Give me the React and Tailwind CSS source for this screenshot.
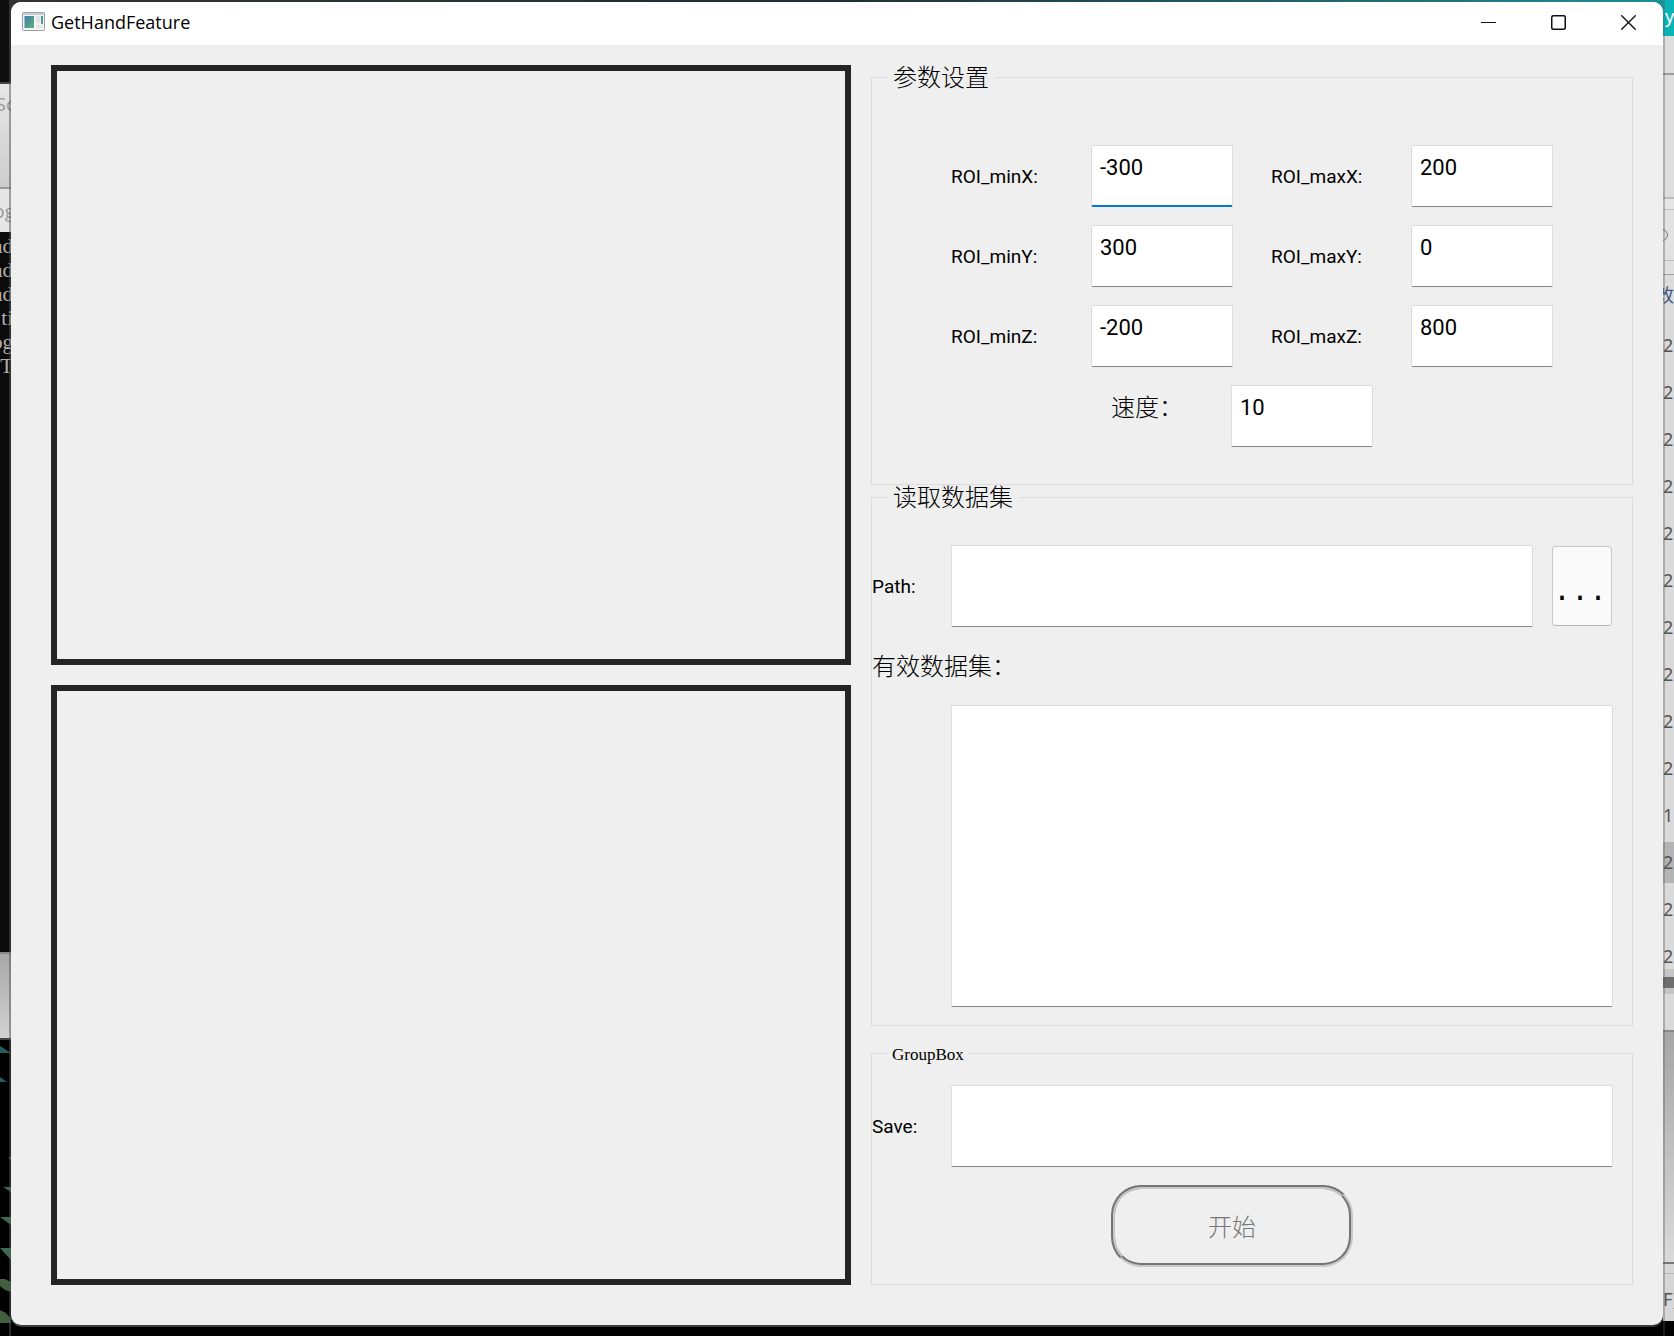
import React from "react";

const inputBase =
  "block resize-none overflow-hidden rounded-[2px] border border-[#dedede] bg-white px-2 pt-2 font-[Roboto,sans-serif] text-[22px] leading-7 text-black outline-none";
const inputStyle = `${inputBase} border-b-[#868686]`;
const activeInputStyle = `${inputBase} border-b-2 border-b-[#0078d4]`;
const latinLabel = "pt-0.5 font-[Roboto,sans-serif] text-[19px] leading-6 text-black";
const cjkLabel = "font-['Noto_Sans_CJK_SC',sans-serif] text-[24px] font-light text-black";

function Group({ title, latin, className, children }) {
  return (
    <fieldset className={`min-w-0 border border-[#dcdcdc] ${className}`}>
      <legend
        className={
          latin
            ? "ml-[15px] h-6 px-[5px] font-['Liberation_Serif',serif] text-[17px] leading-7 text-black"
            : "ml-[15px] h-6 px-1.5 font-['Noto_Sans_CJK_SC',sans-serif] text-[24px] leading-[22px] font-light text-black"
        }
      >
        {title}
      </legend>
      {children}
    </fieldset>
  );
}

function RoiField({ id, value, active }) {
  return (
    <div className="flex items-center">
      <label htmlFor={id} className={`flex-1 ${latinLabel}`}>
        {id}:
      </label>
      <textarea
        id={id}
        defaultValue={value}
        className={`h-[62px] w-[142px] ${active ? activeInputStyle : inputStyle}`}
      />
    </div>
  );
}

function AppIcon() {
  return (
    <svg width="23" height="19" viewBox="0 0 23 19" aria-hidden="true">
      <defs>
        <linearGradient id="pane" x1="0" y1="0" x2="1" y2="1">
          <stop offset="0" stopColor="#3f7fae" />
          <stop offset="1" stopColor="#5fb07a" />
        </linearGradient>
      </defs>
      <rect x="0.5" y="0.5" width="22" height="18" rx="1" fill="#f3f3f3" stroke="#9aa0a6" />
      <rect x="1" y="1" width="21" height="2" fill="#c9ced3" />
      <rect x="2.5" y="4" width="9.5" height="12" fill="url(#pane)" />
      <rect x="14" y="4" width="4" height="7" fill="#e2e2e2" />
      <rect x="19" y="4" width="2" height="8" fill="url(#pane)" />
      <rect x="14" y="13" width="7" height="3" fill="#e6e6e6" />
    </svg>
  );
}

function LeftDesktop() {
  const lines = ["ad", "ad", "ad", "ti", "og", "T"];
  return (
    <div className="relative w-[11px] shrink-0 overflow-hidden bg-black" aria-hidden="true">
      <div className="h-[82px] bg-[#0e0e0e]" />
      <div className="flex h-[107px] justify-end overflow-hidden border-t-2 border-b-2 border-t-[#444] border-b-[#9a9a9a] bg-linear-to-b from-[#e8e8e8] to-[#cccccc] pt-2">
        <span className="-mr-1 font-['Open_Sans',sans-serif] text-[19px] leading-6 text-[#999]">Sc</span>
      </div>
      <div className="flex h-[43px] items-center justify-end overflow-hidden bg-[#e6e6e6]">
        <span className="-mr-1 font-['Open_Sans',sans-serif] text-[19px] leading-5 text-[#999]">og</span>
      </div>
      <div className="flex h-[720px] flex-col items-end overflow-hidden bg-[#0b0b0b] pt-0.5">
        {lines.map((line, i) => (
          <span key={i} className="-mr-0.5 font-['Liberation_Serif',serif] text-[21px] leading-6 text-[#b0b0b0]">
            {line}
          </span>
        ))}
      </div>
      <div className="h-[88px] border-t-2 border-b-2 border-t-[#888] border-b-[#444] bg-linear-to-b from-[#a8a8a8] to-[#d2d2d2]" />
      <svg width="11" height="296" viewBox="0 1040 11 296" className="block">
        <path d="M0 1046L11 1053H0ZM0 1077L7 1082H0Z" fill="#245c60" />
        <path d="M8 1157H11V1160ZM3 1187H11V1192ZM0 1217H11V1225ZM0 1248H11V1260Z" fill="#3d6a55" />
        <path d="M0 1279H5L11 1282V1292L5 1290L0 1286ZM0 1310L6 1313L11 1319V1323H0Z" fill="#3f5f3f" />
      </svg>
      <div className="absolute inset-y-0 right-0 w-[2px] bg-[#555]/50" />
    </div>
  );
}

function RightDesktop() {
  const rows = ["2", "2", "2", "2", "2", "2", "2", "2", "2", "2", "1.", "2", "2", "2"];
  return (
    <div
      className="relative w-[11px] shrink-0 overflow-hidden bg-black font-['Noto_Sans','Noto_Sans_CJK_SC',sans-serif] text-[18px] text-[#555]"
      aria-hidden="true"
    >
      <div className="h-[36px] bg-[#08b4ba] pl-0.5 leading-[32px] text-white">y</div>
      <div className="h-[39px] border-b-2 border-[#9c9c9c] bg-[#dedede]" />
      <div className="h-[124px] border-b-2 border-[#bdbdbd] bg-[#dedede]" />
      <div className="h-[11px] border-b border-[#c2c2c2] bg-[#e6e6e6]" />
      <div className="flex h-[51px] items-center justify-end overflow-hidden border-b border-[#bdbdbd] bg-[#e2e2e2] pr-1.5">
        <span className="size-3 shrink-0 rounded-full border border-[#777]" />
      </div>
      <div className="h-[14px] border-b border-[#a0a0a0] bg-[#e0e0e0]" />
      <div className="flex h-[47px] justify-end overflow-hidden bg-[#dcdcdc] leading-10 text-[#3d587e]">改</div>
      {rows.map((r, i) => (
        <div
          key={i}
          className={`h-[47px] overflow-hidden ${i === 11 ? "border-y-[3px] border-[#dadada] bg-[#b4b4b4] leading-[40px]" : "bg-[#dadada] leading-[46px]"}`}
        >
          {r}
        </div>
      ))}
      <div className="-mt-[11px] h-[8px] bg-[#c5c5c5]" />
      <div className="h-[11px] bg-[#6e6e6e]" />
      <div className="h-[6px] bg-[#c5c5c5]" />
      <div className="h-[38px] border-b-2 border-[#888] bg-[#dadada]" />
      <div className="h-[232px] border-b-2 border-[#777] bg-linear-to-b from-[#a6a6a6] to-[#dadada]" />
      <div className="h-[10px] border-b border-[#bbb] bg-[#d6d6d6]" />
      <div className="h-[47px] overflow-hidden bg-[#d6d6d6] leading-[50px] whitespace-nowrap">F)</div>
      <div className="absolute inset-y-0 left-0 w-[2px] bg-[#555]/35" />
    </div>
  );
}

export default function App() {
  return (
    <div className="flex min-h-screen bg-black">
      <LeftDesktop />
      <div className="flex min-w-0 flex-1 flex-col bg-linear-to-r from-[#333] via-[#1d2f36] to-[#1a8f96] pt-[2px]">
        <div className="flex flex-1 flex-col bg-linear-to-b from-transparent via-[#222] to-black pb-[11px]">
          <main className="flex flex-1 flex-col overflow-hidden rounded-[10px] bg-[#efefef] shadow-[0_2px_0_#3a3a3a]">
            <header className="flex h-[43px] items-center bg-white pb-1 pl-[11px]">
              <AppIcon />
              <h1 className="ml-1.5 flex-1 font-['Open_Sans',sans-serif] text-[18px] leading-6 text-black">GetHandFeature</h1>
              <button type="button" aria-label="Minimize" className="flex h-full w-[70px] items-center justify-center pt-0.5">
                <svg width="15" height="15" viewBox="0 0 15 15" fill="none" stroke="#111">
                  <path d="M0 7.5H15" />
                </svg>
              </button>
              <button type="button" aria-label="Maximize" className="flex h-full w-[70px] items-center justify-center pt-0.5">
                <svg width="15" height="15" viewBox="0 0 15 15" fill="none" stroke="#111" strokeWidth="1.5">
                  <rect x="0.75" y="0.75" width="13.5" height="13.5" rx="1.5" />
                </svg>
              </button>
              <button type="button" aria-label="Close" className="flex h-full w-[70px] items-center justify-center pt-0.5">
                <svg width="15" height="15" viewBox="0 0 15 15" fill="none" stroke="#111" strokeWidth="1.4">
                  <path d="M0.3 0.3L14.7 14.7M14.7 0.3L0.3 14.7" />
                </svg>
              </button>
            </header>

            <div className="grid flex-1 grid-cols-[800fr_762fr] gap-5 pt-5 pr-[30px] pb-10 pl-10">
              <div className="flex flex-col gap-5">
                <section aria-label="view 1" className="flex-1 border-[6px] border-[#242424]" />
                <section aria-label="view 2" className="flex-1 border-[6px] border-[#242424]" />
              </div>

              <form className="flex min-w-0 flex-col">
                <Group title="参数设置" className="pb-[37px]">
                  <div className="grid grid-cols-2 gap-x-[38px] gap-y-[18px] px-[79px] pt-14">
                    <RoiField id="ROI_minX" value="-300" active />
                    <RoiField id="ROI_maxX" value="200" />
                    <RoiField id="ROI_minY" value="300" />
                    <RoiField id="ROI_maxY" value="0" />
                    <RoiField id="ROI_minZ" value="-200" />
                    <RoiField id="ROI_maxZ" value="800" />
                  </div>
                  <div className="mt-[18px] flex justify-center pr-5">
                    <label htmlFor="speed" className={`w-[120px] leading-[42px] ${cjkLabel}`}>
                      速度：
                    </label>
                    <textarea id="speed" defaultValue="10" className={`h-[62px] w-[142px] ${inputStyle}`} />
                  </div>
                </Group>

                <Group title="读取数据集" className="pr-[19px] pb-[18px]">
                  <div className="flex items-center pt-9">
                    <label htmlFor="path" className={`w-[79px] ${latinLabel}`}>
                      Path:
                    </label>
                    <textarea id="path" className={`h-[82px] min-w-0 flex-1 ${inputStyle}`} />
                    <button
                      type="button"
                      aria-label="..."
                      className="mr-px ml-[19px] h-20 w-[60px] rounded-[4px] border border-[#c9c9c9] border-b-[#b5b5b5] bg-[#fafafa] pt-3 text-left font-['Liberation_Mono',monospace] text-[30px] leading-9 text-black"
                    >
                      ...
                    </button>
                  </div>
                  <label htmlFor="datasets" className={`block h-[78px] leading-[76px] ${cjkLabel}`}>
                    有效数据集：
                  </label>
                  <div className="pl-[79px]">
                    <textarea id="datasets" className={`h-[302px] w-full ${inputStyle}`} />
                  </div>
                </Group>

                <Group title="GroupBox" latin className="mt-[15px] flex-1">
                  <div className="flex items-center pt-5 pr-[19px]">
                    <label htmlFor="save" className={`w-[79px] ${latinLabel}`}>
                      Save:
                    </label>
                    <textarea id="save" className={`h-[82px] min-w-0 flex-1 ${inputStyle}`} />
                  </div>
                  <div className="flex justify-center pt-[18px] pr-10 pb-[17px]">
                    <button
                      type="button"
                      disabled
                      className="h-[82px] w-[242px] rounded-[30px] border-4 border-[#c8c8c8] [border-style:groove] font-['Noto_Sans_CJK_SC',sans-serif] text-[24px] font-light text-[#777]"
                    >
                      开始
                    </button>
                  </div>
                </Group>
              </form>
            </div>
          </main>
        </div>
      </div>
      <RightDesktop />
    </div>
  );
}
